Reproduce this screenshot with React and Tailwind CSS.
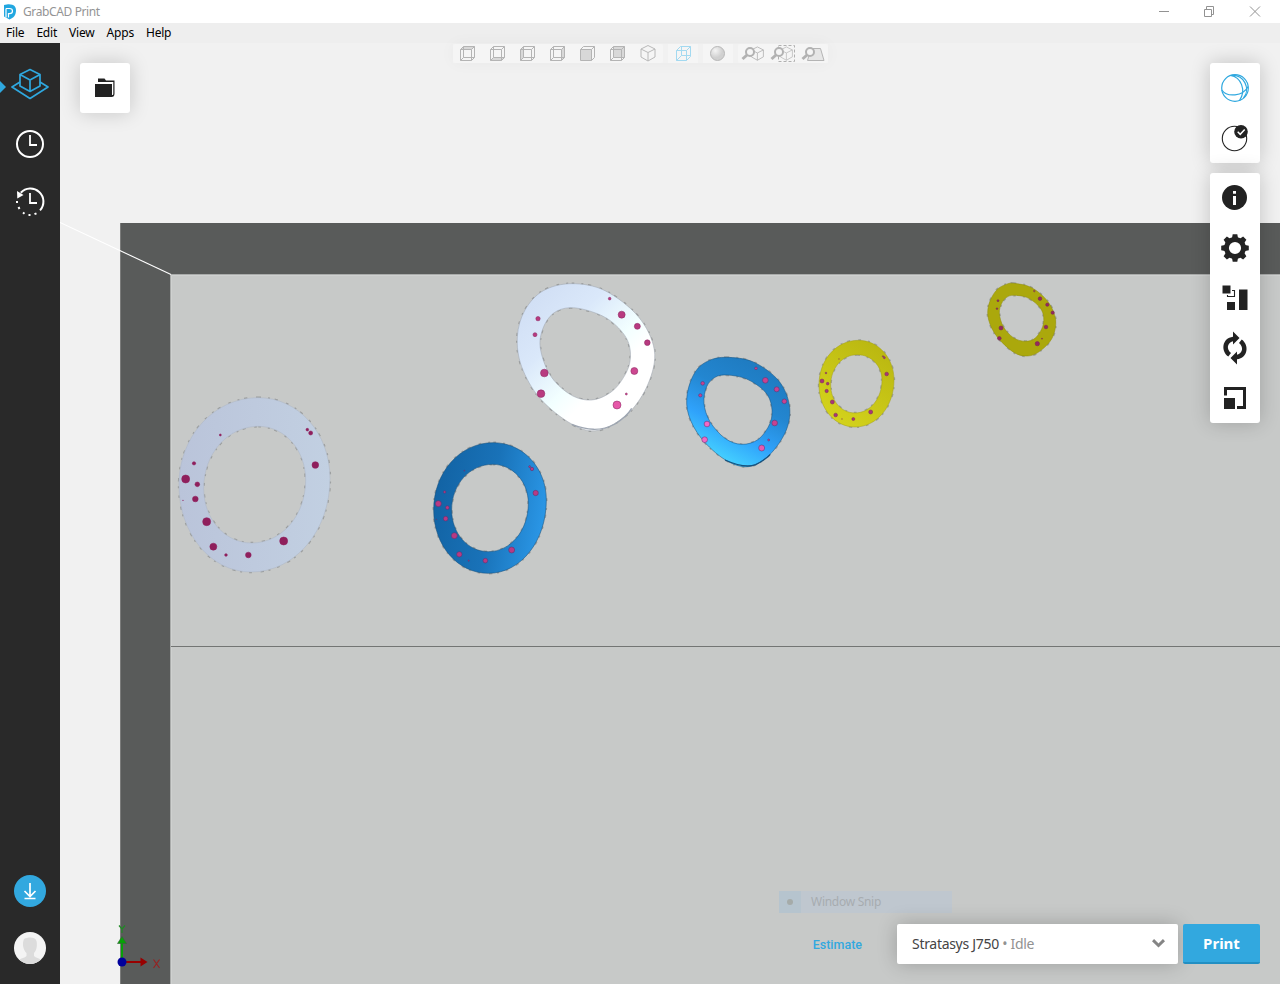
import React from "react";

const smooth = (p) => {
  const n = p.length;
  let d = `M${p[0][0]} ${p[0][1]}`;
  for (let i = 0; i < n; i++) {
    const a = p[(i + n - 1) % n], b = p[i], c = p[(i + 1) % n], e = p[(i + 2) % n];
    d += `C${b[0] + (c[0] - a[0]) / 6} ${b[1] + (c[1] - a[1]) / 6} ${c[0] - (e[0] - b[0]) / 6} ${c[1] - (e[1] - b[1]) / 6} ${c[0]} ${c[1]}`;
  }
  return d + "Z";
};

const oval = ([tx, ty], [rx, ry], [bx, by], [lx, ly]) => {
  const k = 0.56;
  const m = (v, w) => v + (w - v) * k;
  return `M${tx} ${ty}C${m(tx, rx)} ${ty} ${rx} ${m(ry, ty)} ${rx} ${ry}C${rx} ${m(ry, by)} ${m(bx, rx)} ${by} ${bx} ${by}C${m(bx, lx)} ${by} ${lx} ${m(ly, by)} ${lx} ${ly}C${lx} ${m(ly, ty)} ${m(tx, lx)} ${ty} ${tx} ${ty}Z`;
};

const RINGS = [
  {
    at: [170, 385], fill: "url(#pale)", edge: "#aeb7c6", dot: "#8f1f5c", rim: "#8f1f5c",
    outer: oval([265, 38], [480, 280], [243, 561], [27, 300]),
    inner: oval([265, 124], [407, 285], [245, 474], [101, 310]),
    dots: [[151, 150, 3], [412, 134, 4], [422, 144, 6], [436, 240, 10], [72, 235, 5], [47, 282, 12], [82, 298, 7], [39, 346, 1], [76, 342, 8.5], [110, 410, 12], [130, 485, 10.5], [168, 510, 4], [235, 510, 8.5], [341, 468, 12]],
  },
  {
    at: [505, 270], fill: "url(#white)", edge: "#9ea6b2", dot: "#b83a80", rim: "#8c2a62",
    outer: smooth([[200, 41], [300, 62], [400, 140], [448, 240], [430, 340], [370, 430], [280, 481], [200, 462], [105, 385], [50, 290], [37, 200], [60, 120], [115, 62]]),
    inner: smooth([[195, 113], [260, 125], [320, 155], [368, 212], [374, 280], [340, 345], [295, 380], [245, 390], [190, 370], [135, 315], [106, 235], [114, 175], [145, 130]]),
    shade: "M200 463C245 480 285 486 330 462C355 446 370 432 380 415",
    dots: [[314, 86, 4], [350, 134, 10.5], [397, 169, 9], [427, 218, 8.5], [99, 146, 6.5], [90, 194, 6], [118, 309, 11.5], [108, 371, 11.5], [388, 303, 10.5, "#cc4790"], [364, 372, 3, "#cc4790"], [336, 405, 12, "#e658a8"]],
  },
  {
    at: [675, 330], fill: "url(#sky)", edge: "#15517f", dot: "#c84290", rim: "#5a3472",
    outer: smooth([[155, 82], [235, 96], [310, 151], [343, 225], [334, 300], [284, 374], [220, 410], [150, 389], [79, 325], [41, 255], [37, 190], [61, 125], [101, 92]]),
    inner: smooth([[155, 135], [215, 147], [270, 185], [290, 230], [285, 280], [250, 328], [200, 343], [150, 325], [105, 275], [87, 220], [95, 170], [120, 142]]),
    shade: "M150 390C190 408 220 412 242 404C262 394 276 384 286 373",
    dots: [[243, 115, 4], [271, 151, 8.5], [305, 178, 7.5], [328, 214, 7], [83, 160, 5.5], [76, 196, 5], [96, 282, 8.5, "#f468c4"], [89, 329, 8.5, "#f468c4"], [299, 279, 8.5], [281, 330, 3], [260, 354, 9, "#e85ab0"]],
  },
  {
    at: [425, 430], fill: "url(#deep)", edge: "#154d78", dot: "#b83a84", rim: "#59336d",
    outer: oval([205, 38], [364, 210], [190, 430], [26, 240]),
    inner: oval([203, 103], [310, 220], [190, 365], [80, 240]),
    dots: [[118, 122, 1.5], [314, 110, 3], [321, 117, 5], [332, 189, 8], [59, 186, 3.5], [40, 221, 9], [67, 233, 5.5], [34, 268, 1], [62, 266, 7], [88, 317, 9], [103, 373, 8], [131, 392, 2], [181, 392, 7], [260, 360, 9]],
  },
  {
    at: [675, 330], fill: "url(#lemon)", edge: "#a5a31a", dot: "#a93479", rim: "#7a3355",
    outer: oval([550, 31], [657, 150], [540, 291], [432, 165]),
    inner: oval([547, 74], [621, 150], [540, 249], [467, 165]),
    dots: [[492, 87, 1, "#b88a2a"], [624, 79, 2], [628, 83, 3], [635, 132, 5.5], [453, 129, 2.5], [441, 153, 6], [458, 161, 4], [455, 183, 5], [472, 216, 6], [482, 255, 5.5], [501, 267, 1, "#b88a2a"], [535, 267, 4.5], [587, 246, 6]],
  },
  {
    at: [975, 270], fill: "#aba80c", edge: "#8f8d0b", dot: "#952760", rim: "#762a4d",
    outer: smooth([[116, 40], [170, 53], [219, 95], [242, 150], [231, 205], [194, 244], [158, 258], [116, 247], [66, 200], [41, 150], [41, 105], [63, 62], [91, 44]]),
    inner: smooth([[115, 76], [155, 82], [190, 107], [205, 135], [203, 170], [180, 205], [150, 214], [115, 203], [85, 170], [73, 130], [80, 100], [95, 82]]),
    dots: [[178, 63, 2.5, "#a86a35"], [195, 86, 5.5], [217, 104, 5], [233, 128, 5], [69, 92, 3], [66, 116, 2.5], [78, 174, 6], [73, 205, 5.5], [213, 171, 5.5], [201, 206, 1.5], [187, 221, 6.5]],
  },
];

function Scene() {
  return (
    <svg className="absolute inset-0 h-full w-full" viewBox="60 43 1220 941" preserveAspectRatio="xMinYMin slice">
      <defs>
        <linearGradient id="pale" x1="0" x2="1"><stop offset="0" stopColor="#bac4da" /><stop offset="1" stopColor="#c2d0e2" /></linearGradient>
        <linearGradient id="white" x1="0.05" y1="0.1" x2="0.65" y2="0.75"><stop offset="0" stopColor="#d0def4" /><stop offset="0.4" stopColor="#dae8fa" /><stop offset="0.75" stopColor="#f2ffff" /><stop offset="0.92" stopColor="#ffffff" /></linearGradient>
        <linearGradient id="sky" x1="0.7" y1="0.1" x2="0.3" y2="0.9"><stop offset="0" stopColor="#1f7cc2" /><stop offset="0.35" stopColor="#2386d0" /><stop offset="0.7" stopColor="#2fa2fb" /><stop offset="1" stopColor="#44cfff" /></linearGradient>
        <linearGradient id="deep" x1="0" y1="0.4" x2="1" y2="0.6"><stop offset="0" stopColor="#1263a4" /><stop offset="0.5" stopColor="#1972b8" /><stop offset="1" stopColor="#2b98e8" /></linearGradient>
        <linearGradient id="lemon" x1="0.8" y1="0" x2="0.2" y2="1"><stop offset="0" stopColor="#b9b610" /><stop offset="1" stopColor="#d5d41c" /></linearGradient>
      </defs>
      <rect x="120" y="223" width="1160" height="761" fill="#595b5a" />
      <path d="M120.5 223V984" stroke="#7b7c7b" />
      <rect x="171" y="275" width="1109" height="709" fill="#c7c9c8" />
      <path d="M170.5 984V274.5H1280" fill="none" stroke="#a9abaa" />
      <path d="M171.5 984V275.5H1280" fill="none" stroke="#cfd1d0" />
      <path d="M60 222.5L171 274.5" stroke="#ffffff" strokeWidth="1.1" />
      <path d="M171 646.5H1280" stroke="#737574" />
      {RINGS.map((r, i) => (
        <g key={i} transform={`translate(${r.at[0]} ${r.at[1]}) scale(0.33333)`}>
          <path d={r.outer + r.inner} fill="none" stroke="#9b9d9c" strokeWidth="7" strokeDasharray="8 21 6 14 10 26" />
          <path d={r.outer + r.inner} fillRule="evenodd" fill={r.fill} stroke={r.edge} strokeWidth="1.6" />
          {r.shade && <path d={r.shade} fill="none" stroke={r.edge} strokeWidth="4" />}
          {r.dots.map(([x, y, s, c], j) => (
            <circle key={j} cx={x} cy={y} r={s} fill={c || r.dot} stroke={r.rim} strokeWidth="1.6" />
          ))}
        </g>
      ))}
      <path d="M122 962V942" stroke="#07a007" strokeWidth="2" />
      <path d="M122 936.5L126.500 943.500H117.500Z" fill="#07a007" stroke="#35603a" strokeWidth=".6" />
      <path d="M122 962H141" stroke="#980000" strokeWidth="2" />
      <path d="M147.500 962L140.500 957.500V966.500Z" fill="#980000" />
      <circle cx="122" cy="962" r="4.500" fill="#00009c" />
      <path d="M119 925.500L122 929L125 925.500M122 929V933" fill="none" stroke="#1f8a24" strokeWidth="1.200" />
      <path d="M153.500 959.500L159.500 968M159.500 959.500L153.500 968" fill="none" stroke="#9a1f1f" strokeWidth="1.100" />
    </svg>
  );
}

const CUBE = { top: "M1.500 4.500L5 1.500H16L12.500 4.500Z", bottom: "M1.500 15.500L5 12.500H16L12.500 15.500Z", left: "M1.500 4.500L5 1.500V12.500L1.500 15.500Z", right: "M12.500 4.500L16 1.500V12.500L12.500 15.500Z", front: "M1.500 4.500H12.500V15.500H1.500Z", back: "M5 1.500H16V12.500H5Z" };

function FaceCube({ face }) {
  return (
    <svg className="mr-0.5 h-[17px] w-[17px]" viewBox="0 0 17 17" fill="none" stroke="#b4b4b4" strokeWidth="1">
      {face && <path d={CUBE[face]} fill="#d8d8d8" stroke="none" />}
      <path d="M1.500 4.500H12.500V15.500H1.500ZM1.500 4.500L4.500 1.500H15.500V12.500L12.500 15.500M12.500 4.500L15.500 1.500" />
      {face !== "front" && <path d="M4.500 1.500V12.500H15.500M4.500 12.500L1.500 15.500" />}
    </svg>
  );
}

const ISO = "M8 0.500L15 4V12L8 16L1 12V4ZM1 4L8 7.500L15 4M8 7.500V16";

function Lens() {
  return <g><circle cx="9" cy="7" r="4" fill="#f5f5f5" stroke="#b2b2b2" strokeWidth="2" /><path d="M6 10L1.500 14" stroke="#b2b2b2" strokeWidth="3" /></g>;
}

function Cell({ children }) {
  return <div className="flex h-[19px] w-[30px] items-center justify-center bg-[#f5f5f5]">{children}</div>;
}

function ViewBar() {
  return (
    <div className="mt-px ml-[323px] flex gap-[5px] shadow-[0_0_16px_rgba(0,0,0,0.04)]">
      <div className="flex overflow-hidden rounded-[2px]">
        {["top", "bottom", "left", "right", "front", "back"].map((f) => (
          <Cell key={f}><FaceCube face={f} /></Cell>
        ))}
        <Cell><svg className="h-[17px] w-4" viewBox="0 0 16 17" fill="none" stroke="#b8b8b8"><path d={ISO} /></svg></Cell>
      </div>
      <Cell>
        <svg className="h-[17px] w-[17px]" viewBox="0 0 17 17" fill="none" stroke="#a3d9f0"><path d="M1.500 5.500H11.500V15.500H1.500ZM1.500 5.500L5.500 1.500H15.500V11.500L11.500 15.500M11.500 5.500L15.500 1.500M6.500 1.500V10.500H15.500M6.500 10.500L1.500 15.500" /></svg>
      </Cell>
      <Cell>
        <svg className="mr-0.5 h-[17px] w-[17px]" viewBox="0 0 17 17"><defs><radialGradient id="ball" cx=".35" cy=".3"><stop stopColor="#f4f4f4" /><stop offset="1" stopColor="#d0d0d0" /></radialGradient></defs><circle cx="8.500" cy="8.500" r="7" fill="url(#ball)" stroke="#b8b8b8" /></svg>
      </Cell>
      <div className="flex overflow-hidden rounded-[2px]">
        <Cell><svg className="mr-px h-[17px] w-6" viewBox="0 0 24 17" fill="none"><path d={ISO} transform="translate(9.500 1.500) scale(.86)" stroke="#b4b4b4" /><Lens /></svg></Cell>
        <Cell><svg className="mr-px h-[17px] w-[26px]" viewBox="0 0 26 17" fill="none"><path d={ISO} transform="translate(9.500 1.500) scale(.86)" stroke="#c0c0c0" /><path d="M8.500 0.500H24.500V16.500H8.500Z" stroke="#b0b0b0" strokeDasharray="3 2" /><Lens /></svg></Cell>
        <Cell><svg className="h-[17px] w-6" viewBox="0 0 24 17" fill="none"><path d="M10 3.500H19.500L23 15.500H6.500Z" fill="#e6e6e6" stroke="#b4b4b4" /><Lens /></svg></Cell>
      </div>
    </div>
  );
}

function Tool({ children }) {
  return (
    <button className="flex h-[50px] w-[50px] items-center justify-center">
      <svg className="h-[30px] w-[30px] overflow-visible" viewBox="0 0 30 30" fill="none">{children}</svg>
    </button>
  );
}

const TEETH = [0, 45, 90, 135, 180, 225, 270, 315];
const HALF_TURN = "M8.300 23.500C0.500 18 2 5 13 3.700V-1.500L19.500 5L13 11.500V8.200C7 10 6.300 16 11 20Z";

function ToolPanels() {
  const card = "flex flex-col rounded-[3px] bg-white shadow-[0_0_20px_rgba(0,0,0,0.2)]";
  return (
    <div className="mt-5 ml-auto flex flex-col gap-2.5">
      <div className={card}>
        <Tool>
          <g stroke="#2fa8df" strokeWidth="1.200"><circle cx="15" cy="15" r="13.300" /><path d="M1.800 17C7 24.500 23 23.500 28.200 13.500M10.500 2.500C21 4 26.500 17 19.500 27.600M10.500 2.500C24 0.500 31 16 23.500 25" /></g>
        </Tool>
        <Tool>
          <circle cx="14.500" cy="15.500" r="12.200" stroke="#222" strokeWidth="1.100" />
          <circle cx="21" cy="8.800" r="6.800" fill="#222" />
          <path d="M17.700 8.800L20.200 11.300L24.700 6.500" stroke="#fff" strokeWidth="1.500" />
        </Tool>
      </div>
      <div className={card}>
        <Tool>
          <circle cx="14.500" cy="14.500" r="12.500" fill="#222" />
          <path d="M13 8H16V10.800H13ZM13 13H16V22H13Z" fill="#fff" />
        </Tool>
        <Tool>
          <circle cx="15" cy="15" r="8.500" stroke="#222" strokeWidth="4.800" />
          {TEETH.map((a) => <path key={a} d="M11.800 6L12.700 1.200H17.300L18.200 6Z" fill="#222" transform={`rotate(${a} 15 15)`} />)}
        </Tool>
        <Tool>
          <path d="M2.500 2.500H10.500V10.500H2.500ZM7 19H15V27H7ZM19 6.500H27.500V27H19Z" fill="#222" />
          <path d="M12 7.500H14.500V13.500H7.500V12" stroke="#222" strokeWidth="1.100" />
        </Tool>
        <Tool>
          <g fill="#222">
            <path d={HALF_TURN} />
            <path d={HALF_TURN} transform="rotate(180 15 15)" />
          </g>
        </Tool>
        <Tool>
          <path d="M4 15H15V26H4Z" fill="#222" />
          <path d="M5.500 12.500V5.500H24.500V24.500H17" stroke="#222" strokeWidth="3" />
        </Tool>
      </div>
    </div>
  );
}

function Sidebar() {
  return (
    <aside className="relative flex w-[60px] flex-col items-center bg-[#292929] pt-[25px] pb-5">
      <svg className="absolute top-[38px] left-0 h-3 w-1.5" viewBox="0 0 6 12"><path d="M0 0L6 6L0 12Z" fill="#2fa8df" /></svg>
      <svg className="h-8 w-[38px]" viewBox="0 0 38 32" fill="none" stroke="#2fa8df" strokeWidth="1.700" strokeLinejoin="round">
        <path d="M19 1.500L29 6.500V18L19 23.500L9 18V6.500ZM9 6.500L19 12L29 6.500M19 12V23.500" />
        <path d="M9 14L1 19L19 30.500L37 19L29 14" />
      </svg>
      <svg className="mt-[29px] h-[30px] w-[30px]" viewBox="0 0 30 30" fill="none" stroke="#fff" strokeWidth="2">
        <circle cx="15" cy="15" r="13" /><path d="M15 6V16H22" strokeWidth="1.800" />
      </svg>
      <svg className="mt-7 h-[30px] w-[30px]" viewBox="0 0 30 30" fill="none" stroke="#fff" strokeWidth="2">
        <path d="M5.800 5.800A13 13 0 0 1 25 23.400" /><path d="M2 4L2.300 11.500L8.500 8Z" fill="#fff" stroke="none" />
        <path d="M2 14V16M3.500 20L4.500 22M8 25.500L9.500 26.700M13.500 28H15.500M19.500 27.200L21.500 26.300" />
        <path d="M15 6V16H22" strokeWidth="1.800" />
      </svg>
      <button className="mt-auto h-8 w-8 rounded-full bg-[#32a8df]">
        <svg viewBox="0 0 32 32" fill="none" stroke="#fff" strokeWidth="1.700"><path d="M16 8V21M10.500 16L16 21.500L21.500 16M10.500 23.500H21.500" /></svg>
      </button>
      <div className="mt-[25px] h-8 w-8 overflow-hidden rounded-full bg-[#f4f4f4]">
        <svg viewBox="0 0 32 32" fill="#dcdcdc"><path d="M10 7C14 5 21 4.500 22.500 9C23.500 13 22.500 19 20 21V24C22 26 25 26 27 28V32H5V28C7 26 11 26 12.500 24V21C9 18 8 11 10 7Z" /></svg>
      </div>
    </aside>
  );
}

export default function App() {
  return (
    <div className="flex h-[984px] w-[1280px] flex-col overflow-hidden bg-[#f1f1f1] font-['Noto_Sans',sans-serif]">
      <header className="flex h-[23px] shrink-0 items-center bg-white pl-1 text-[12px] text-[#949494]">
        <svg className="h-4 w-3" viewBox="0 0 12 16"><path d="M0 1L4 0.300C10 0 12 3 12 6.500C12 11 9.500 14 5.500 15.500L0 12.500Z" fill="#22a7e0" /><path d="M2 4.500H5.500C9.500 4.500 9.500 9.700 5.500 9.700H4.500V13.500M2 4.500V13.500" fill="none" stroke="#fff" strokeWidth="1.200" /></svg>
        <span className="ml-[7px] tracking-[-0.380px]">GrabCAD Print</span>
        <svg className="mr-[19px] ml-auto h-[11px] w-[102px]" viewBox="0 0 102 11" fill="none" stroke="#929292"><path d="M0 5.500H10M45.500 3.500H52.500V10.500H45.500ZM47.500 3V0.500H54.500V8.500H53M91 0.500L101 10.500M101 0.500L91 10.500" /></svg>
      </header>
      <nav className="flex h-5 shrink-0 items-center gap-3 bg-[#eeeeee] pl-1.5 text-[12px] tracking-[-0.200px] text-black">
        {["File", "Edit", "View", "Apps", "Help"].map((t) => <span key={t}>{t}</span>)}
      </nav>
      <div className="flex min-h-0 flex-1">
        <Sidebar />
        <main className="relative flex-1">
          <Scene />
          <div className="relative flex h-full flex-col px-5 pb-5">
            <div className="flex items-start">
              <button className="mt-5 flex h-[50px] w-[50px] items-center justify-center rounded-[3px] bg-white shadow-[0_0_20px_rgba(0,0,0,0.18)]">
                <svg className="h-5 w-5" viewBox="0 0 20 20" fill="#222"><path d="M3 .5H9.500L11 2.500H19.500V15.500C19.500 18 18.500 19 16.500 19H0V6H17V17C18 17 18.300 16.500 18.300 15.500V4H3Z" /></svg>
              </button>
              <ViewBar />
              <ToolPanels />
            </div>
            <div className="mt-auto ml-[699px] flex h-[22px] w-[173px] bg-[#bfc7cf] text-[12px] text-[#a7acb0]">
              <div className="flex w-[22px] items-center justify-center bg-[#b6c4ce]"><span className="h-1.5 w-1.5 rounded-full bg-[#a5aba9]" /></div>
              <span className="ml-2.5 leading-[22px] tracking-[-0.280px]">Window Snip</span>
            </div>
            <div className="mt-[11px] flex h-10 items-center justify-end">
              <button className="mt-0.5 mr-[35px] font-['Roboto',sans-serif] text-[12.500px] font-medium text-[#32a8df]">Estimate</button>
              <div className="flex h-10 w-[281px] items-center rounded-[2px] bg-white pr-[13px] pb-px pl-[15px] text-[14px] text-[#444] shadow-[0_0_20px_rgba(0,0,0,0.22)]">
                <span className="tracking-[-0.300px]">Stratasys J750 <span className="text-[#929292]">• Idle</span></span>
                <svg className="ml-auto h-[9px] w-[13px]" viewBox="0 0 13 9" fill="none" stroke="#858585" strokeWidth="3"><path d="M1 1.200L6.500 6.500L12 1.200" /></svg>
              </div>
              <button className="ml-[5px] h-10 w-[77px] rounded-[2px] border-b-2 border-[#228fc3] bg-[#32a8df] text-[15px] font-bold text-white">Print</button>
            </div>
          </div>
        </main>
      </div>
    </div>
  );
}
